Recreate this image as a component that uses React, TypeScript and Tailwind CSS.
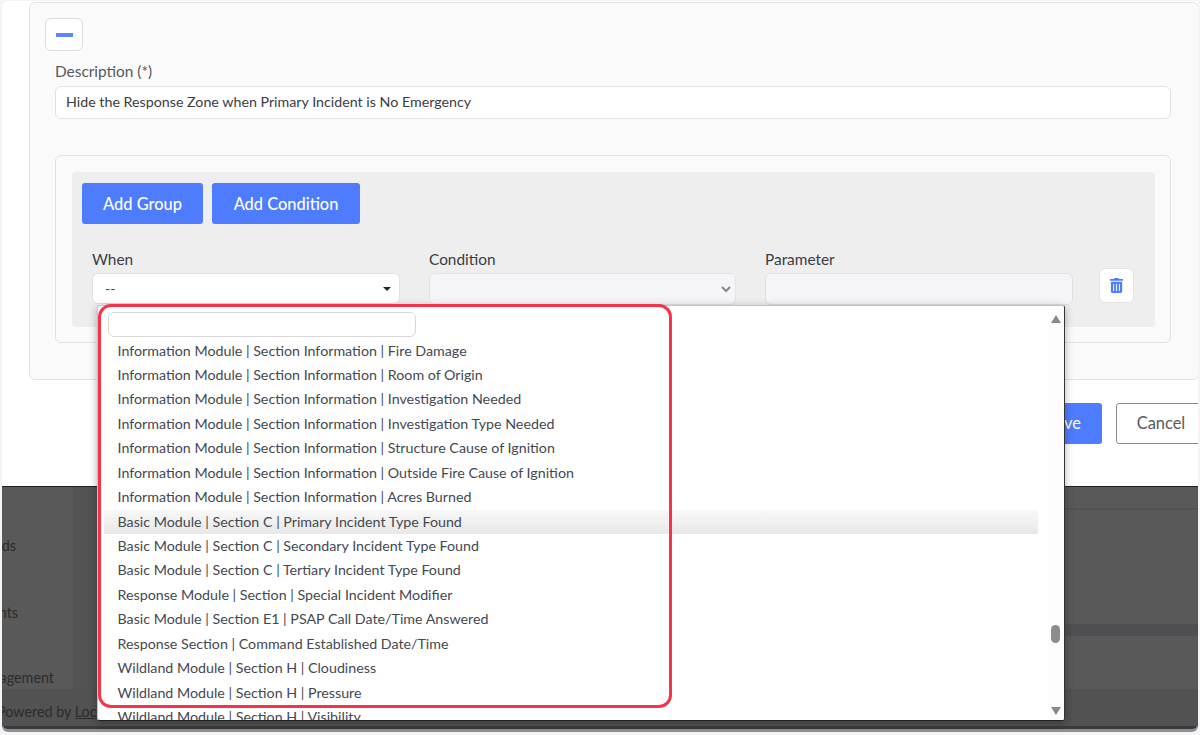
import { FaTrashAlt } from "react-icons/fa";

const options = [
  "Information Module | Section Information | Fire Damage",
  "Information Module | Section Information | Room of Origin",
  "Information Module | Section Information | Investigation Needed",
  "Information Module | Section Information | Investigation Type Needed",
  "Information Module | Section Information | Structure Cause of Ignition",
  "Information Module | Section Information | Outside Fire Cause of Ignition",
  "Information Module | Section Information | Acres Burned",
  "Basic Module | Section C | Primary Incident Type Found",
  "Basic Module | Section C | Secondary Incident Type Found",
  "Basic Module | Section C | Tertiary Incident Type Found",
  "Response Module | Section | Special Incident Modifier",
  "Basic Module | Section E1 | PSAP Call Date/Time Answered",
  "Response Section | Command Established Date/Time",
  "Wildland Module | Section H | Cloudiness",
  "Wildland Module | Section H | Pressure",
  "Wildland Module | Section H | Visibility",
];

function Field({ label, width, children }: { label: string; width: string; children: React.ReactNode }) {
  return (
    <div className={`flex flex-col ${width}`}>
      <label className="text-[15.4px] leading-[20px] text-[#3a3d45] mb-[4px]">{label}</label>
      {children}
    </div>
  );
}

function Dropdown() {
  return (
    <div className="absolute left-[97px] top-[305px] w-[968px] h-[416px] bg-white border border-[#c4c4c4] border-b-[#222] border-r-[#333] rounded-[3px] overflow-hidden shadow-[0_2px_8px_rgba(0,0,0,0.3)]">
      <div className="pl-[10px] pt-[6px]">
        <div className="w-[308px] h-[25px] border border-[#d8d8d8] rounded-[6px] bg-white" />
      </div>
      <ul className="mt-[1.5px] ml-[6px] w-[934px]">
        {options.map((o, i) => (
          <li
            key={o}
            className={`h-[24.45px] leading-[24px] pl-[13.5px] text-[14.25px] text-[#444851] whitespace-nowrap ${
              i === 7 ? "bg-gradient-to-b from-[#f8f8f8] to-[#e8e8e8]" : ""
            }`}
          >
            {o}
          </li>
        ))}
      </ul>
      <div className="absolute right-0 top-0 bottom-0 w-[16px] bg-[#fdfdfd]">
        <div className="absolute left-[3px] top-[9px] w-0 h-0 border-x-[5px] border-x-transparent border-b-[8px] border-b-[#888]" />
        <div className="absolute left-[3px] top-[319px] w-[9px] h-[18px] rounded-[5px] bg-[#8c8c8c]" />
        <div className="absolute left-[3px] bottom-[5px] w-0 h-0 border-x-[5px] border-x-transparent border-t-[8px] border-t-[#888]" />
      </div>
    </div>
  );
}

export default function App() {
  return (
    <div className="relative w-[1200px] h-[735px] overflow-hidden bg-[#f4f4f8] font-['Lato','Open_Sans',sans-serif]">
      <div className="h-[486px] mt-[1px] mx-[2px] bg-white rounded-tl-[6px] pl-[27px] pt-[1px] border-b border-[#222] overflow-hidden">
        <div className="w-[1170px] h-[378px] bg-[#fafafa] border border-[#e2e2e4] rounded-[6px] pl-[15px] pt-[15px]">
          <button className="flex items-center justify-center w-[38px] h-[33px] bg-white border border-[#dcdcdc] rounded-[6px]">
            <span className="block w-[17px] h-[4px] bg-[#5f86fb]" />
          </button>
          <div className="ml-[10px] mt-[10px] w-[1116px]">
            <label className="block text-[15.4px] leading-[20px] text-[#555960] mb-[5px]">Description (*)</label>
            <div className="h-[33px] bg-white border border-[#e2e2e2] rounded-[6px] pl-[10px] text-[14.25px] leading-[30px] text-[#3a3d45]">
              Hide the Response Zone when Primary Incident is No Emergency
            </div>
            <div className="mt-[36px] h-[188px] bg-[#fafafa] border border-[#e2e2e2] rounded-[6px] pl-[16px] pt-[16px]">
              <div className="w-[1083px] h-[155px] bg-[#eeeeee] rounded-[4px] pl-[10px] pt-[11px]">
                <div className="flex gap-[9px]">
                  <button className="w-[121px] h-[41px] pt-[2px] bg-[#4d7cfe] rounded-[3px] text-white text-[16.4px] font-medium">Add Group</button>
                  <button className="w-[148px] h-[41px] pt-[2px] bg-[#4d7cfe] rounded-[3px] text-white text-[16.4px] font-medium">Add Condition</button>
                </div>
                <div className="flex items-start gap-[29px] mt-[25px] pl-[10px]">
                  <Field label="When" width="w-[308px]">
                    <div className="flex items-center justify-between h-[31px] bg-white border border-[#e0e0e0] rounded-[6px] pl-[12px] pr-[8px] text-[14.25px] text-[#444851]">
                      <span>--</span>
                      <span className="w-0 h-0 border-x-[4px] border-x-transparent border-t-[4px] border-t-[#222]" />
                    </div>
                  </Field>
                  <Field label="Condition" width="w-[307px]">
                    <div className="flex items-center justify-end h-[32px] bg-[#f5f5f7] border border-[#e4e4e4] rounded-[6px] pr-[3px]">
                      <svg width="12" height="12" viewBox="0 0 12 12" fill="none" stroke="#888" strokeWidth="2"><path d="M2 4l4 4 4-4" /></svg>
                    </div>
                  </Field>
                  <Field label="Parameter" width="w-[308px]">
                    <div className="h-[32px] bg-[#f5f5f7] border border-[#e0e0e0] rounded-[6px]" />
                  </Field>
                  <button className="flex items-center justify-center ml-[-3px] mt-[19px] w-[35px] h-[35px] bg-white border border-[#e4e4e4] rounded-[6px]">
                    <FaTrashAlt size={15} className="text-[#4d7cfe]" />
                  </button>
                </div>
              </div>
            </div>
          </div>
        </div>
        <div className="flex gap-[14px] mt-[23px] ml-[997px] w-[180px]">
          <button className="w-[76px] shrink-0 h-[41px] bg-[#4d7cfe] rounded-[3px] text-white text-[16.4px]">Save</button>
          <button className="w-[90px] shrink-0 h-[41px] bg-white border border-[#8a8a8a] rounded-[3px] text-[#555960] text-[16.4px]">Cancel</button>
        </div>
      </div>
      <div className="mx-[2px] h-[242px] bg-[#595959] flex flex-col rounded-b-[6px] border-b-[3px] border-b-[#3a3a3a] shadow-[0_3px_0_#8f8f8f]">
        <div className="flex h-[202px]">
          <div className="w-[71px] text-[14.35px] leading-[20px] text-[#2c2c2c] relative overflow-hidden">
            <span className="absolute right-[57px] top-[49px]">ds</span>
            <span className="absolute right-[55px] top-[116px]">nts</span>
            <span className="absolute right-[19px] top-[181px] whitespace-nowrap">agement</span>
          </div>
          <div className="w-[100px] bg-[#535353]" />
          <div className="flex-1 flex flex-col">
            <div className="h-[23px] border-b-2 border-[#525252]" />
            <div className="h-[114px]" />
            <div className="h-[12px] bg-[#4f4f51]" />
            <div className="flex-1" />
          </div>
        </div>
        <div className="h-[37px] bg-[#525252] text-[14.35px] leading-[20px] text-[#2c2c2c] pt-[13px] whitespace-nowrap overflow-hidden">
          <span className="-ml-[5px] inline-block">Powered by <span className="underline">Local</span></span>
        </div>
      </div>
      <Dropdown />
      <div className="absolute left-[98px] top-[304px] w-[574px] h-[404px] border-[3px] border-[#f4344a] rounded-[13px]" />
    </div>
  );
}
